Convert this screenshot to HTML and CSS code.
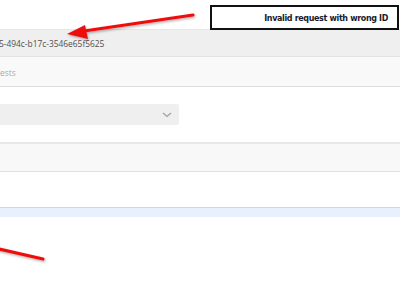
FILE: index.html
```html
<!DOCTYPE html>
<html>
<head>
<meta charset="utf-8">
<link rel="stylesheet" href="styles.css">
</head>
<body>
<div class="page">
  <div class="top"></div>
  <div class="id-row"><span class="id-text">5-494c-b17c-3546e65f5625</span></div>
  <div class="sub-row"><span class="sub-text">ests</span></div>
  <div class="form">
    <div class="select">
      <svg class="chev" width="10" height="6" viewBox="0 0 10 6"><path d="M1 1 L5 4.5 L9 1" fill="none" stroke="#a0a0a0" stroke-width="1.3"/></svg>
    </div>
  </div>
  <div class="band"></div>
  <div class="blue"></div>

  <div class="note">Invalid request with wrong ID</div>
  <svg class="arrows" width="400" height="284" viewBox="0 0 400 284">
    <defs>
      <filter id="sh" x="-10%" y="-50%" width="120%" height="200%">
        <feDropShadow dx="1" dy="1.5" stdDeviation="1" flood-color="#000" flood-opacity="0.3"/>
      </filter>
    </defs>
    <g filter="url(#sh)">
      <line x1="193" y1="15" x2="84" y2="31" stroke="#ee1111" stroke-width="3.2" stroke-linecap="round"/>
      <polygon points="67,34 85,25 88,39" fill="#ee1111"/>
      <line x1="-5" y1="248" x2="43" y2="259" stroke="#ee1111" stroke-width="3.2" stroke-linecap="round"/>
    </g>
  </svg>
</div>
</body>
</html>
```
FILE: styles.css
```css
html, body {
  margin: 0;
  padding: 0;
  background: #fff;
}
body {
  font-family: "Open Sans", "Liberation Sans", sans-serif;
  width: 400px;
  height: 284px;
  overflow: hidden;
}
.page {
  position: relative;
  width: 400px;
  height: 284px;
  overflow: hidden;
}
.top {
  height: 29px;
}
.id-row {
  height: 26px;
  background: #efefef;
  border-top: 1px solid #e6e6e6;
  border-bottom: 1px solid #e2e2e2;
  display: flex;
  align-items: center;
}
.id-text {
  font-size: 8.4px;
  color: #505050;
  margin-left: -1px;
  margin-top: 1px;
}
.sub-row {
  height: 29px;
  background: #f9f9f9;
  border-bottom: 1px solid #dcdcdc;
  display: flex;
  align-items: center;
}
.sub-text {
  font-size: 8.4px;
  color: #aaa;
  margin-top: 1px;
}
.form {
  padding-top: 17px;
}
.select {
  width: 179px;
  height: 21px;
  background: #efefef;
  border-radius: 0 2px 2px 0;
  display: flex;
  align-items: center;
  justify-content: flex-end;
}
.chev {
  margin-right: 7px;
  margin-top: 1px;
}
.band {
  margin-top: 17px;
  height: 27px;
  background: #f8f8f8;
  border-top: 2px solid #e8e8e8;
  border-bottom: 1px solid #e0e0e0;
}
.blue {
  margin-top: 35px;
  height: 9px;
  background: #e7f0fc;
  border-top: 1px solid #d6d6d6;
}
.note {
  position: absolute;
  left: 210px;
  top: 5px;
  width: 176px;
  height: 21px;
  border: 2px solid #111;
  background: #fff;
  font-family: "DejaVu Sans", "Liberation Sans", sans-serif;
  font-weight: bold;
  font-size: 8px;
  letter-spacing: -0.35px;
  color: #1a1a2a;
  display: flex;
  align-items: center;
  justify-content: flex-end;
  padding-right: 9px;
  padding-top: 1px;
  height: 20px;
  box-sizing: content-box;
}
.arrows {
  position: absolute;
  left: 0;
  top: 0;
}
```
